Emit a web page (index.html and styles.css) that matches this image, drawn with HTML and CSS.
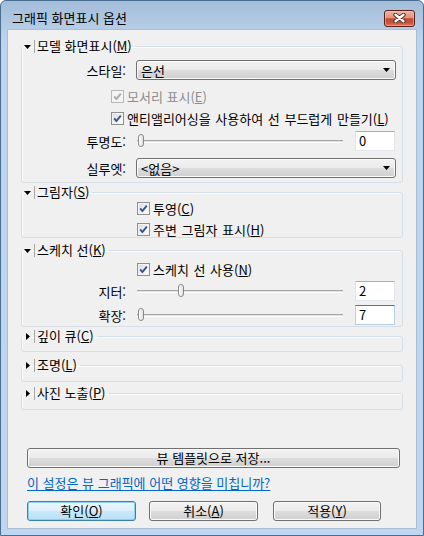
FILE: index.html
```html
<!DOCTYPE html>
<html lang="ko">
<head>
<meta charset="utf-8">
<title>그래픽 화면표시 옵션</title>
<link rel="stylesheet" href="styles.css">
</head>
<body>
<div class="window">
  <div class="titlebar">
    <span class="title">그래픽 화면표시 옵션</span>
    <span class="close">
      <svg width="13" height="10" viewBox="0 0 13 10"><path d="M2.5 1.8 L10.5 8.2 M10.5 1.8 L2.5 8.2" stroke="#4a2620" stroke-width="4.2" stroke-linecap="round" fill="none"/><path d="M2.5 1.8 L10.5 8.2 M10.5 1.8 L2.5 8.2" stroke="#ffffff" stroke-width="2.4" stroke-linecap="round" fill="none"/></svg>
    </span>
  </div>
  <div class="client">
    <fieldset class="group g1">
      <legend><span class="twist"><svg width="7" height="4" viewBox="0 0 7 4"><polygon points="0,0 7,0 3.5,4" fill="#000"/></svg></span><span class="sep"></span><span class="gtext">모델 화면표시(<u>M</u>)</span></legend>
      <div class="body b1">
        <div class="row">
          <span class="label">스타일:</span>
          <span class="combo"><span class="ctext">은선</span><svg width="7" height="4" viewBox="0 0 7 4"><polygon points="0,0 7,0 3.5,4" fill="#000"/></svg></span>
        </div>
        <div class="cbrow in1 r-cb1">
          <span class="check disabled"><svg width="11" height="11" viewBox="0 0 11 11"><path d="M2.2 5.4 L4.4 8 L8.8 2.6" stroke="#a9a9a9" stroke-width="1.9" fill="none"/></svg></span>
          <span class="dis">모서리 표시(<u>E</u>)</span>
        </div>
        <div class="cbrow in1 r-cb2">
          <span class="check"><svg width="11" height="11" viewBox="0 0 11 11"><path d="M2.2 5.4 L4.4 8 L8.8 2.6" stroke="#3c4f8e" stroke-width="1.9" fill="none"/></svg></span>
          <span class="words">앤티앨리어싱을 사용하여 선 부드럽게 만들기(<u>L</u>)</span>
        </div>
        <div class="row r-slider1">
          <span class="label">투명도:</span>
          <span class="slider"><span class="track"></span><span class="thumb" style="left:1px"></span></span>
          <span class="textbox">0</span>
        </div>
        <div class="row r-combo2">
          <span class="label">실루엣:</span>
          <span class="combo"><span class="ctext">&lt;없음&gt;</span><svg width="7" height="4" viewBox="0 0 7 4"><polygon points="0,0 7,0 3.5,4" fill="#000"/></svg></span>
        </div>
      </div>
    </fieldset>

    <fieldset class="group g2">
      <legend><span class="twist"><svg width="7" height="4" viewBox="0 0 7 4"><polygon points="0,0 7,0 3.5,4" fill="#000"/></svg></span><span class="sep"></span><span class="gtext">그림자(<u>S</u>)</span></legend>
      <div class="body b2">
        <div class="cbrow in2 r-cb3">
          <span class="check"><svg width="11" height="11" viewBox="0 0 11 11"><path d="M2.2 5.4 L4.4 8 L8.8 2.6" stroke="#3c4f8e" stroke-width="1.9" fill="none"/></svg></span>
          <span>투영(<u>C</u>)</span>
        </div>
        <div class="cbrow in2 r-cb4">
          <span class="check"><svg width="11" height="11" viewBox="0 0 11 11"><path d="M2.2 5.4 L4.4 8 L8.8 2.6" stroke="#3c4f8e" stroke-width="1.9" fill="none"/></svg></span>
          <span class="words">주변 그림자 표시(<u>H</u>)</span>
        </div>
      </div>
    </fieldset>

    <fieldset class="group g3">
      <legend><span class="twist"><svg width="7" height="4" viewBox="0 0 7 4"><polygon points="0,0 7,0 3.5,4" fill="#000"/></svg></span><span class="sep"></span><span class="gtext">스케치 선(<u>K</u>)</span></legend>
      <div class="body b3">
        <div class="cbrow in2 r-cb5">
          <span class="check"><svg width="11" height="11" viewBox="0 0 11 11"><path d="M2.2 5.4 L4.4 8 L8.8 2.6" stroke="#3c4f8e" stroke-width="1.9" fill="none"/></svg></span>
          <span class="words">스케치 선 사용(<u>N</u>)</span>
        </div>
        <div class="row r-slider2">
          <span class="label">지터:</span>
          <span class="slider"><span class="track"></span><span class="thumb" style="left:41px"></span></span>
          <span class="textbox">2</span>
        </div>
        <div class="row r-slider3">
          <span class="label">확장:</span>
          <span class="slider"><span class="track"></span><span class="thumb" style="left:1px"></span></span>
          <span class="textbox focus">7</span>
        </div>
      </div>
    </fieldset>

    <fieldset class="group g4 collapsed">
      <legend><span class="twist"><svg width="4" height="7" viewBox="0 0 4 7"><polygon points="0,0 4,3.5 0,7" fill="#000"/></svg></span><span class="sep"></span><span class="gtext">깊이 큐(<u>C</u>)</span></legend>
      <div class="body bc1"></div>
    </fieldset>

    <fieldset class="group g5 collapsed">
      <legend><span class="twist"><svg width="4" height="7" viewBox="0 0 4 7"><polygon points="0,0 4,3.5 0,7" fill="#000"/></svg></span><span class="sep"></span><span class="gtext">조명(<u>L</u>)</span></legend>
      <div class="body bc2"></div>
    </fieldset>

    <fieldset class="group g6 collapsed">
      <legend><span class="twist"><svg width="4" height="7" viewBox="0 0 4 7"><polygon points="0,0 4,3.5 0,7" fill="#000"/></svg></span><span class="sep"></span><span class="gtext">사진 노출(<u>P</u>)</span></legend>
      <div class="body bc2"></div>
    </fieldset>

    <span class="btn wide">뷰 템플릿으로 저장...</span>
    <a class="link" href="#">이 설정은 뷰 그래픽에 어떤 영향을 미칩니까?</a>
    <div class="actions">
      <span class="btn default b-ok">확인(<u>O</u>)</span>
      <span class="btn b-cancel">취소(<u>A</u>)</span>
      <span class="btn b-apply">적용(<u>Y</u>)</span>
    </div>
  </div>
</div>
</body>
</html>
```

FILE: styles.css
```css
html, body {
  margin: 0;
  padding: 0;
}
body {
  width: 424px;
  height: 536px;
  overflow: hidden;
  font-family: "Noto Sans CJK KR", "Noto Sans", sans-serif;
  font-size: 13px;
  color: #000;
  background: #ffffff;
}
u {
  text-decoration: underline;
  text-underline-offset: 1px;
}

.window {
  box-sizing: border-box;
  width: 424px;
  height: 536px;
  border: 1px solid #4a6d92;
  border-radius: 6px 6px 0 0;
  background: linear-gradient(to bottom, #a3bcd8 0px, #b4cce6 26px, #bcd4ec 40px, #bfd6ee 100%);
  display: flex;
  flex-direction: column;
}

.titlebar {
  flex: none;
  height: 29px;
  box-sizing: border-box;
  padding: 5px 8px 0 11px;
  display: flex;
  align-items: center;
}
.title {
  flex: 1;
  line-height: 16px;
  white-space: nowrap;
}
.close {
  width: 31px;
  height: 17px;
  box-sizing: border-box;
  border: 1px solid #5a1e17;
  border-radius: 3px;
  background: linear-gradient(to bottom, #ebb3a6 0%, #df9281 45%, #c8492f 52%, #c9523a 78%, #d87a62 100%);
  box-shadow: inset 0 0 0 1px rgba(255, 210, 200, 0.45);
  display: flex;
  align-items: center;
  justify-content: center;
}

.client {
  flex: 1;
  margin: 0 7px 7px;
  background: #f0f0f0;
  box-sizing: border-box;
  padding: 9px 13px 7px;
  display: flex;
  flex-direction: column;
  box-shadow: 0 0 0 1px #a9bdd4;
}

.group {
  margin: 0;
  padding: 0;
  min-width: 0;
  border: 1px solid #d5dfe5;
  border-radius: 3px;
  box-shadow: inset 1px 1px 0 #fbfbfb;
}
.group legend {
  padding: 0 3px 0 0;
  margin: 0;
  height: 14px;
  line-height: 14px;
}
.group legend .twist,
.group legend .sep,
.group legend .gtext {
  display: inline-block;
  vertical-align: top;
}
.twist {
  width: 12px;
  height: 14px;
  box-sizing: border-box;
  padding-left: 2px;
  position: relative;
}
.twist svg {
  display: block;
  margin-top: 6px;
}
.collapsed .twist {
  padding-left: 4px;
}
.collapsed .twist svg {
  margin-top: 4px;
}
.sep {
  width: 1px;
  height: 13px;
  margin-top: 1px;
  background: #a7a7a7;
}
.gtext {
  margin-left: 2px;
  white-space: nowrap;
}

.g2 { margin-top: 2px; }
.g3 { margin-top: 5px; }
.g4 { margin-top: 2px; }
.g5 { margin-top: 6px; }
.g6 { margin-top: 4px; }

.body {
  display: flex;
  flex-direction: column;
}
.b1 { padding-bottom: 4px; }
.b1 .row:first-child { margin-top: 7px; }
.r-cb1 { margin-top: 8px; }
.r-cb2 { margin-top: 6px; }
.r-slider1 { margin-top: 5px; }
.r-combo2 { margin-top: 7px; }

.r-cb3 { margin-top: 1px; }
.r-cb4 { margin-top: 5px; }

.b3 { padding-bottom: 1px; }
.r-cb5 { margin-top: 4px; }
.r-slider2 { margin-top: 4px; }
.r-slider3 { margin-top: 4px; }

.bc1 { height: 8px; }
.bc2 { height: 9px; }

.row {
  display: flex;
  align-items: center;
  height: 20px;
}
.label {
  flex: none;
  width: 104px;
  text-align: right;
  white-space: nowrap;
}
.combo {
  flex: none;
  margin-left: 10px;
  width: 260px;
  height: 20px;
  box-sizing: border-box;
  border: 1px solid #707070;
  border-radius: 3px;
  background: linear-gradient(to bottom, #f3f3f3 0%, #ebebeb 48%, #dddddd 52%, #cfcfcf 100%);
  box-shadow: inset 0 0 0 1px #fbfbfb;
  display: flex;
  align-items: center;
  padding: 0 5px 0 4px;
}
.ctext {
  flex: 1;
  white-space: nowrap;
}

.cbrow {
  display: flex;
  align-items: center;
  height: 16px;
  white-space: nowrap;
}
.in1 { padding-left: 89px; }
.in2 { padding-left: 115px; }
.check {
  flex: none;
  width: 13px;
  height: 13px;
  box-sizing: border-box;
  border: 1px solid #8e8f8f;
  background: linear-gradient(135deg, #d6d9de 0%, #f2f3f4 60%, #fdfdfd 100%);
  box-shadow: inset 0 0 0 1px #f4f4f4;
  margin-right: 3px;
  display: flex;
  align-items: center;
  justify-content: center;
}
.check svg {
  display: block;
}
.check.disabled {
  border-color: #b9b9b9;
  background: #f4f4f4;
}
.dis {
  color: #8d8d8d;
}
.words {
  word-spacing: 1px;
}

.slider {
  flex: none;
  margin-left: 11px;
  width: 206px;
  height: 20px;
  position: relative;
  display: flex;
  align-items: center;
}
.track {
  width: 100%;
  height: 3px;
  box-sizing: border-box;
  border-top: 1px solid #a6a6a6;
  border-bottom: 1px solid #ffffff;
  background: #e2e2e2;
}
.thumb {
  position: absolute;
  top: 3px;
  width: 6px;
  height: 13px;
  box-sizing: border-box;
  border: 1px solid #8a8a8a;
  border-radius: 3px;
  background: linear-gradient(to right, #ffffff 0%, #ececec 60%, #d9d9d9 100%);
}
.textbox {
  flex: none;
  margin-left: 12px;
  width: 40px;
  height: 20px;
  box-sizing: border-box;
  border: 1px solid #e2e3ea;
  border-top-color: #abadb3;
  border-bottom-color: #e3e9ef;
  background: #fff;
  padding-left: 3px;
  line-height: 18px;
}
.textbox.focus {
  border-color: #b5cfe7;
  border-top-color: #3d7bad;
}

.btn {
  box-sizing: border-box;
  height: 20px;
  border: 1px solid #707070;
  border-radius: 3px;
  background: linear-gradient(to bottom, #f2f2f2 0%, #ebebeb 48%, #dddddd 52%, #cfcfcf 100%);
  box-shadow: inset 0 0 0 1px #fafafa;
  display: flex;
  align-items: center;
  justify-content: center;
  white-space: nowrap;
  line-height: 16px;
}
.wide {
  margin: 38px 3px 0 6px;
}
.link {
  margin: 7px 0 0 6px;
  height: 16px;
  line-height: 16px;
  color: #0066cc;
  text-decoration: underline;
  text-underline-offset: 2px;
  align-self: flex-start;
  white-space: nowrap;
}
.actions {
  margin-top: 10px;
  display: flex;
  padding-left: 6px;
}
.b-ok { width: 109px; }
.b-cancel { width: 109px; margin-left: 13px; }
.b-apply { width: 108px; margin-left: 15px; }
.btn.default {
  border-color: #3c7fb1;
  background: linear-gradient(to bottom, #ebf6fd 0%, #dcf1fc 48%, #c9e9fa 52%, #b9e0f6 100%);
  box-shadow: inset 0 0 0 1px #8fd0f2;
}
```
